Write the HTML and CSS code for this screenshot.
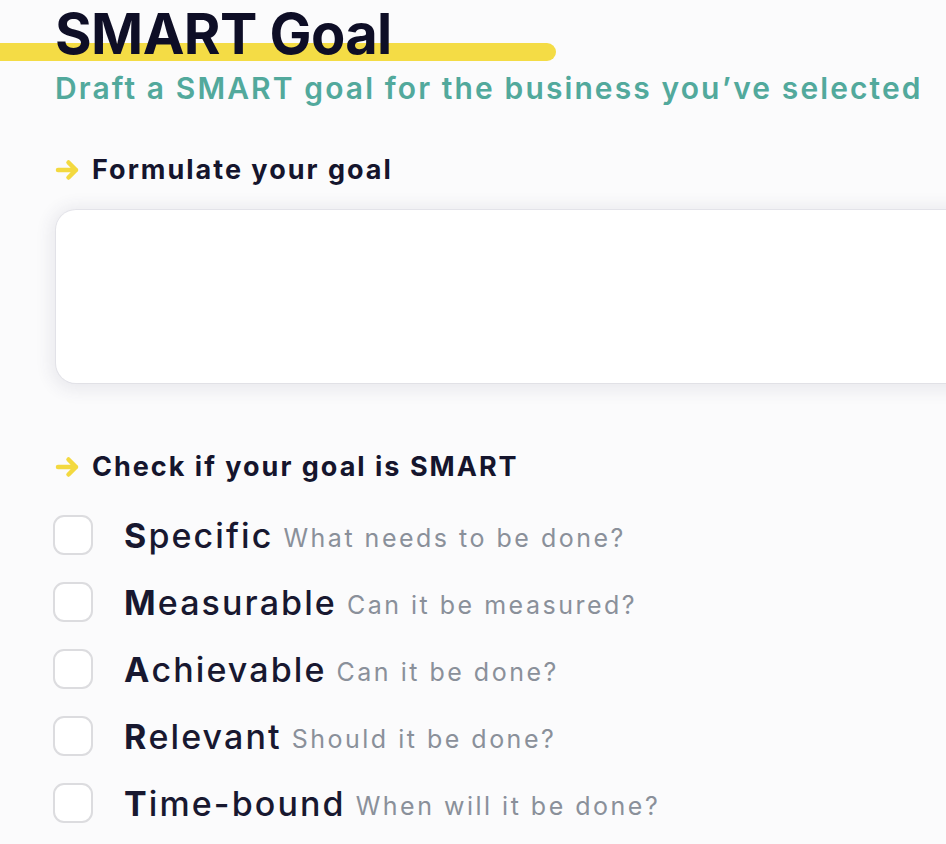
FILE: index.html
```html
<!DOCTYPE html>
<html lang="en">
<head>
<meta charset="utf-8">
<title>SMART Goal</title>
<link rel="stylesheet" href="styles.css">
</head>
<body>
<main class="page">
  <header class="header">
    <h1 class="title">SMART Goal</h1>
    <p class="subtitle">Draft a SMART goal for the business you’ve selected</p>
  </header>

  <section class="section">
    <h2 class="section-label">
      <svg class="arrow" viewBox="0 0 26 22" aria-hidden="true"><path d="M3 11 H21 M13.5 3.5 L21 11 L13.5 18.5" fill="none" stroke="#f3d940" stroke-width="4.5" stroke-linecap="round" stroke-linejoin="round"/></svg>
      Formulate your goal
    </h2>
    <textarea class="goal-input" aria-label="Your goal"></textarea>
  </section>

  <section class="section checks">
    <h2 class="section-label">
      <svg class="arrow" viewBox="0 0 26 22" aria-hidden="true"><path d="M3 11 H21 M13.5 3.5 L21 11 L13.5 18.5" fill="none" stroke="#f3d940" stroke-width="4.5" stroke-linecap="round" stroke-linejoin="round"/></svg>
      Check if your goal is SMART
    </h2>
    <ul class="check-list">
      <li class="check-row"><span class="box"></span><span class="word"><b>S</b>pecific</span><span class="hint">What needs to be done?</span></li>
      <li class="check-row"><span class="box"></span><span class="word"><b>M</b>easurable</span><span class="hint">Can it be measured?</span></li>
      <li class="check-row"><span class="box"></span><span class="word"><b>A</b>chievable</span><span class="hint">Can it be done?</span></li>
      <li class="check-row"><span class="box"></span><span class="word"><b>R</b>elevant</span><span class="hint">Should it be done?</span></li>
      <li class="check-row"><span class="box"></span><span class="word"><b>T</b>ime-bound</span><span class="hint">When will it be done?</span></li>
    </ul>
  </section>
</main>
</body>
</html>
```

FILE: styles.css
```css
* { box-sizing: border-box; }

html, body {
  margin: 0;
  padding: 0;
  background: #fbfbfc;
  font-family: "Inter", "DejaVu Sans", sans-serif;
  color: #14142b;
  overflow: hidden;
}

.page {
  width: 946px;
  height: 844px;
  padding: 0 0 0 55px;
  overflow: hidden;
}

.header {
  position: relative;
}

.header::before {
  content: "";
  position: absolute;
  left: -55px;
  top: 43px;
  width: 556px;
  height: 18px;
  border-radius: 0 10px 10px 0;
  background: #f4dc45;
}

.title {
  position: relative;
  margin: 0;
  font-size: 56px;
  line-height: 68px;
  font-weight: 700;
  letter-spacing: -0.6px;
  color: #0e0e26;
}

.subtitle {
  margin: 2px 0 0;
  font-size: 30px;
  line-height: 36px;
  font-weight: 600;
  letter-spacing: 2.1px;
  color: #52a99c;
  white-space: nowrap;
}

.section-label {
  display: flex;
  align-items: center;
  gap: 11px;
  margin: 0;
  font-size: 27px;
  line-height: 32px;
  font-weight: 700;
  color: #15152d;
  letter-spacing: 2px;
}

.section { margin-top: 48px; }

.arrow {
  width: 26px;
  height: 22px;
  flex: none;
}

.goal-input {
  display: block;
  margin: 24px 0 0 1px;
  width: 960px;
  height: 173px;
  border: none;
  border-radius: 20px;
  background: #ffffff;
  box-shadow: 0 2px 16px 6px rgba(60, 60, 90, 0.085), 0 0 0 1px rgba(228, 228, 234, 0.55);
  resize: none;
  outline: none;
}

.checks { margin-top: 68px; }

.check-list {
  list-style: none;
  margin: 29px 0 0;
  padding: 0;
  display: flex;
  flex-direction: column;
  gap: 21px;
}

.check-row {
  display: flex;
  align-items: center;
  height: 46px;
}

.box {
  width: 40px;
  height: 40px;
  margin-left: -2px;
  border: 2px solid #dcdcdf;
  border-radius: 11px;
  background: #fff;
  flex: none;
}

.word {
  margin-left: 31px;
  font-size: 34px;
  font-weight: 500;
  letter-spacing: 2.1px;
  color: #181830;
}

.word b { font-weight: 700; }

.hint {
  margin-left: 10px;
  margin-top: 5px;
  font-size: 25px;
  font-weight: 400;
  letter-spacing: 2.5px;
  color: #8a909a;
}
```
